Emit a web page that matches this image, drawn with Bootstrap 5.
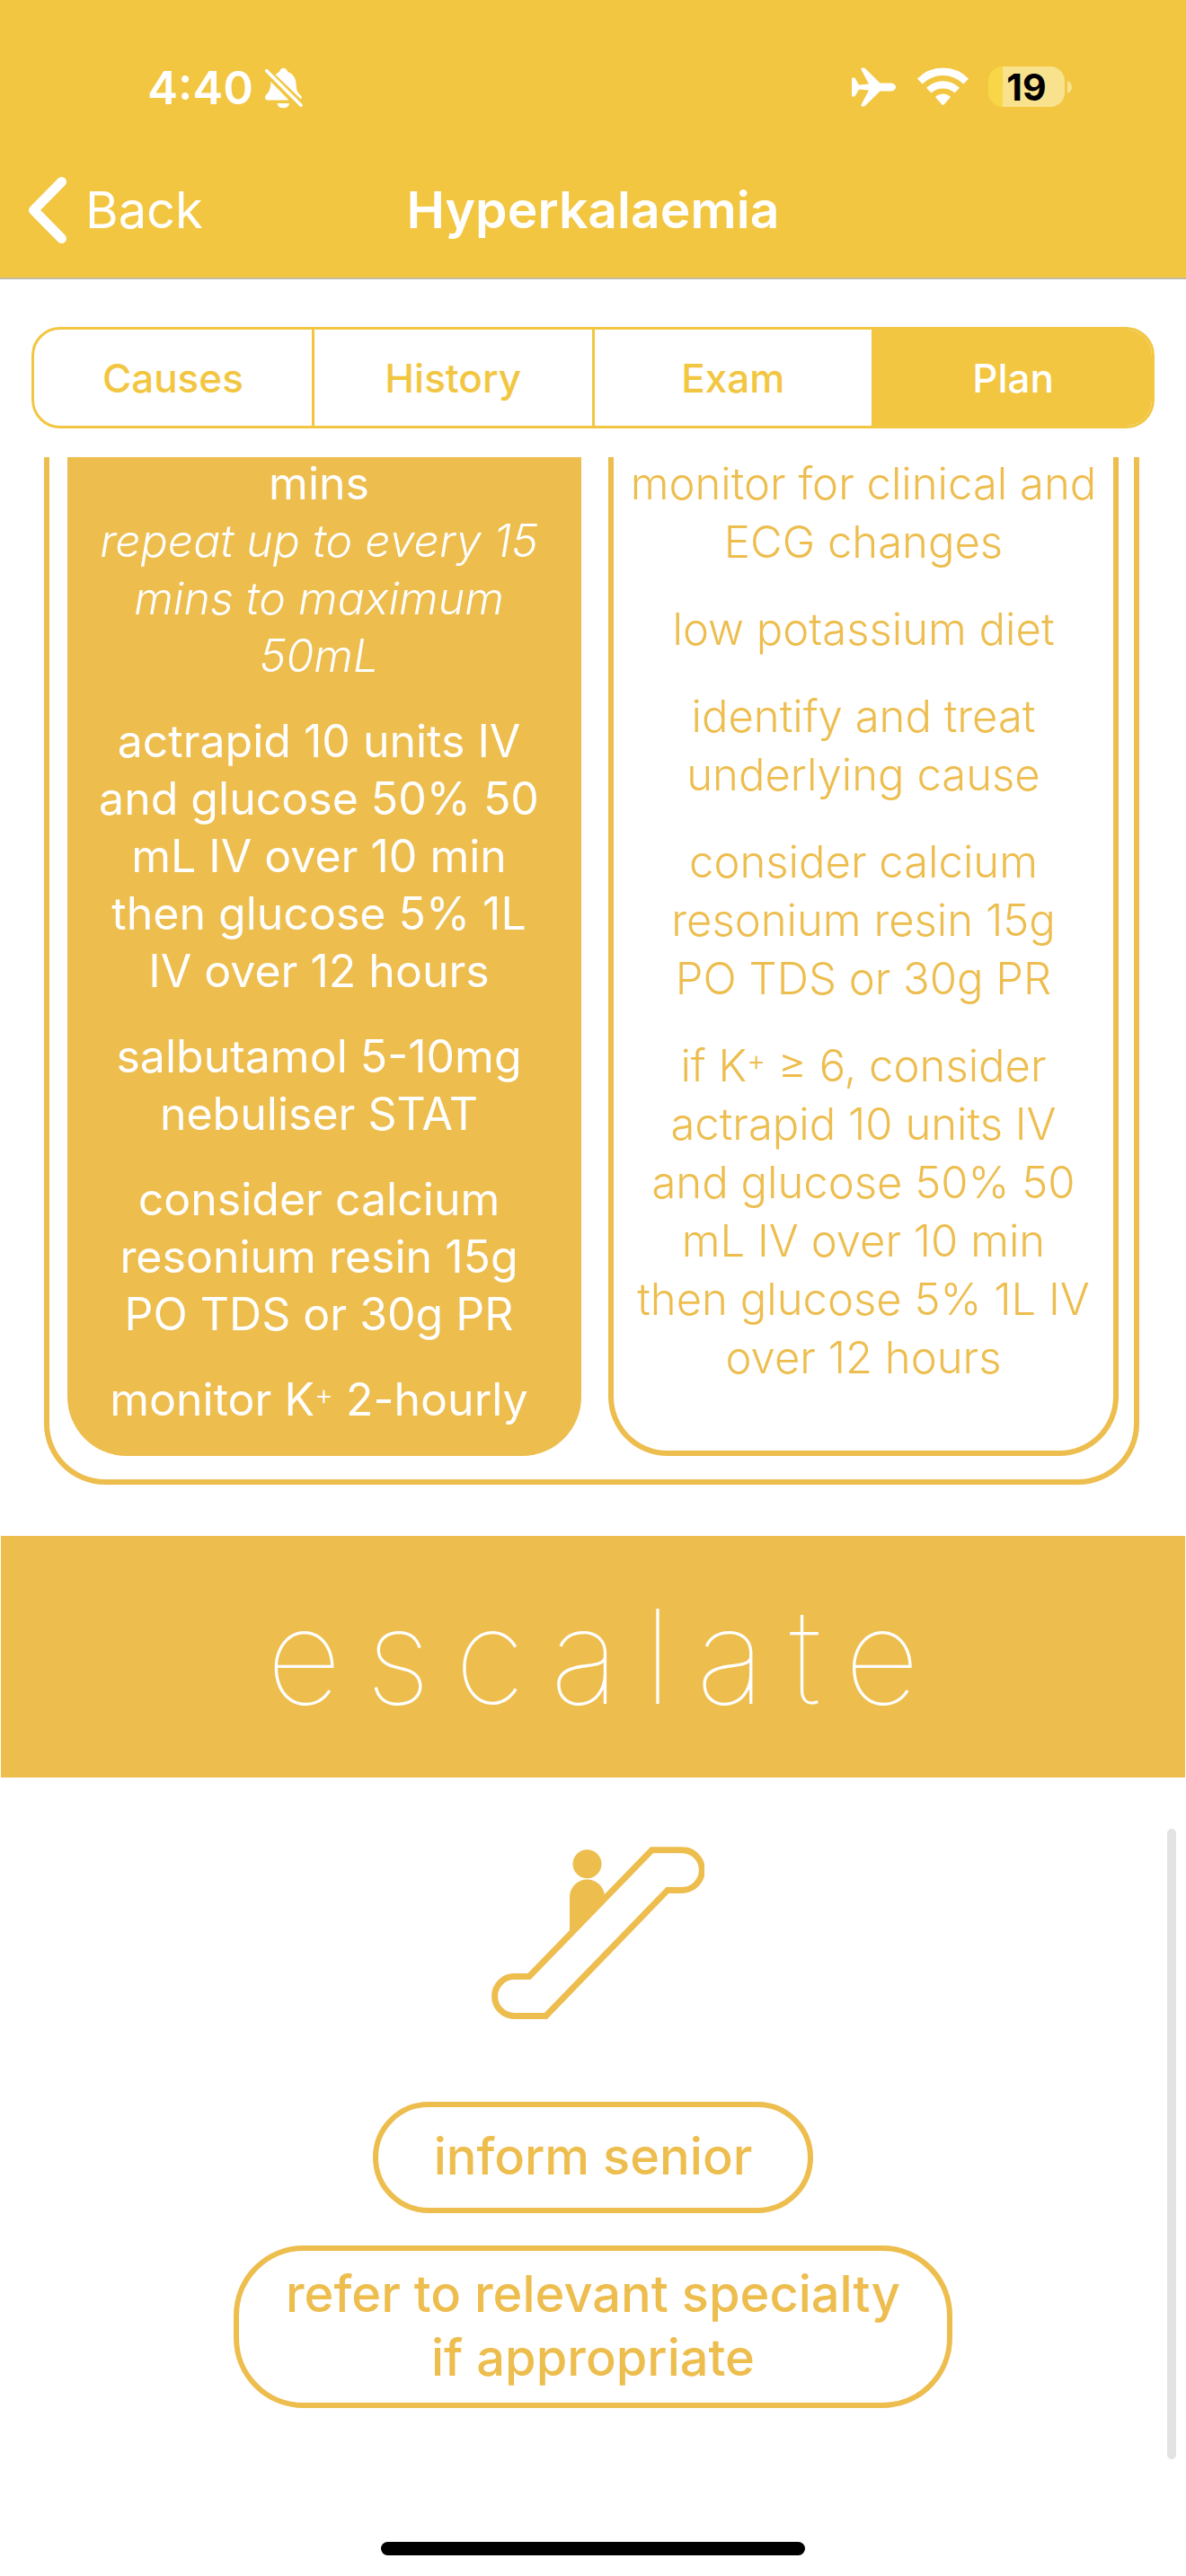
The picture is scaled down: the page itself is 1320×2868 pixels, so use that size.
<!DOCTYPE html>
<html lang="en">
<head>
<meta charset="utf-8">
<meta name="viewport" content="width=device-width, initial-scale=1">
<title>Hyperkalaemia</title>
<link href="https://cdn.jsdelivr.net/npm/bootstrap@5.3.0/dist/css/bootstrap.min.css" rel="stylesheet">
<style>
  :root { --bar: #f2c641; --tone: #edbd4e; }
  body { font-family: Inter, "Liberation Sans", sans-serif; background: #fff; }
  .topbar { background: var(--bar); color: #fff; border-bottom: 2px solid #c3bba4; }
  .statusline { padding: 66px 126px 0 164px; height: 132px; }
  .clock { font-size: 51px; line-height: 64px; font-weight: 600; margin-right: 12px; }
  .battery { width: 85px; height: 45px; border-radius: 16px; font-size: 41px; line-height: 46px; font-weight: 700; color: #000; margin: 0 3px 0 22px;
    background: linear-gradient(to right, #f7d748 16px, #f8e28d 16px); }
  .titlebar { height: 177px; padding: 64px 31px 0; display: grid; grid-template-columns: 1fr auto 1fr; align-items: start; }
  .back-link { font-size: 56px; line-height: 76px; gap: 21px; }
  .page-title { font-size: 57px; line-height: 76px; font-weight: 600; }
  .tabs-wrap { padding: 53px 35px 32px; }
  .segments { border: 3px solid var(--bar); border-radius: 32px; overflow: hidden; height: 113px; }
  .segments .btn { flex: 1 1 0; border: 0; border-radius: 0; font-size: 44px; line-height: 60px; font-weight: 500; color: var(--bar); }
  .segments .btn + .btn { border-left: 3px solid var(--bar); }
  .segments .btn.active { background: var(--bar); color: #fff; }
  .plan-frame { margin: 0 52px 0 49px; padding: 0 17px 26px 20px; border: 6px solid var(--tone); border-top: 0; border-radius: 0 0 68px 68px; }
  .plan-frame > .plan-cols { gap: 30px; }
  .plan-card { flex: 1 1 0; min-width: 0; border: 6px solid var(--tone); border-top: 0; border-radius: 0 0 66px 66px; text-align: center; color: var(--tone); }
  .plan-card p { margin: 0; }
  .plan-card p:first-child { margin-top: -3px; }
  .severe { background: var(--tone); color: #fff; font-size: 50px; line-height: 64px; padding: 0 20px 25px 8px; }
  .severe p + p { margin-top: 31px; }
  .severe em { font-weight: 300; }
  .mild { font-size: 49px; line-height: 65px; font-weight: 300; padding: 0 12px; }
  .mild p + p { margin-top: 32px; }
  .ion { font-size: 32px; line-height: 1; font-weight: 300; vertical-align: 12px; }
  .banner { margin: 57px 1px 0; height: 269px; background: var(--tone); color: #fff; font-size: 146px; line-height: 269px; font-weight: 100; letter-spacing: 27px; padding-left: 27px; text-align: center; }
  .lift-icon { display: block; margin-top: 77px; }
  .pill { border: 6px solid var(--tone); color: var(--tone); background: #fff; font-weight: 500; font-size: 56px; line-height: 71px; }
  .pill:hover { color: var(--tone); background: #fff; border-color: var(--tone); }
  .pill-one { border-radius: 62px; padding: 20px 62px 21px; margin-top: 91px; }
  .pill-two { border-radius: 78px; padding: 13px 52px 14px; margin-top: 36px; }
  .scroll-thumb { top: 2036px; right: 11px; width: 10px; height: 702px; border-radius: 5px; background: #e3e3e3; }
  .home-bar { width: 472px; height: 15px; border-radius: 8px; background: #000; margin: 149px auto 24px; }
</style>
</head>
<body class="position-relative">
<header class="topbar">
  <div class="statusline d-flex align-items-start">
    <span class="clock">4:40</span>
    <svg class="mt-2" width="44" height="48" viewBox="0 0 44 48" fill="#fff" role="img" aria-label="Silent">
      <path d="M12.500 9C14 7.500 15.500 6.500 17 6C18 3 19.500 1.700 21.500 1.700S25 3 26.500 6C32 8 35.300 13 35.500 19C36 27 37 29 40 31.500C41.800 33 42.300 35 41 36.500Z"/>
      <path d="M7.500 17L27.500 37.500H4C0.500 37.500 0.500 33.500 2 32C6 28 7 25 7.500 17Z"/>
      <path d="M14.500 41H28C27.500 44.500 25 46.200 21.300 46.200S15 44.500 14.500 41Z"/>
      <path d="M2.700 4.700L41 43.300" stroke="#fff" stroke-width="3.600" stroke-linecap="round"/>
    </svg>
    <div class="d-flex align-items-center ms-auto mt-2">
      <svg width="49" height="44" viewBox="0 0 49 44" fill="#fff" role="img" aria-label="Airplane mode">
        <path d="M0 12Q2.500 10.500 4 12.500L8 19.500L19 18.500L10.500 2.500Q10 0.500 12 0.500H13Q14.500 0.500 15.500 1.700L31.500 17.500H43C46.500 17.500 49 19.500 49 22S46.500 26.500 43 26.500H31.500L15.500 42.300Q14.500 43.500 13 43.500H12Q10 43.500 10.500 41.500L19 25.500L8 24.500L4 31.500Q2.500 33.500 0 32Z"/>
      </svg>
      <svg class="ms-4" width="57" height="43" viewBox="0 0 57 43" fill="#fff" role="img" aria-label="Wi-Fi">
        <path d="M0 12.500Q12 0.500 28.500 0.500T57 12.500L51.500 18.500Q41.500 9 28.500 9T5.500 18.500Z"/>
        <path d="M10 22.800Q18 15.300 28.500 15.300T47 22.800L41.500 28.500Q36 23.500 28.500 23.500T15.500 28.500Z"/>
        <path d="M20 33Q23.500 29.500 28.500 29.500T37 33L29.800 41.300Q28.500 42.500 27.200 41.300Z"/>
      </svg>
      <div class="battery text-center">19</div>
      <svg width="6" height="14" viewBox="0 0 6 14" aria-hidden="true"><path d="M0 0C3 1 5 4 5 7S3 13 0 14Z" fill="#f8e28d"/></svg>
    </div>
  </div>
  <nav class="titlebar" aria-label="Page">
    <a href="#" class="back-link d-flex align-items-center text-white text-decoration-none">
      <svg width="43" height="76" viewBox="0 0 43 76" fill="none" stroke="#fff" stroke-width="11" stroke-linecap="round" stroke-linejoin="round" aria-hidden="true"><path d="M37.500 6.500L6.500 38L37.500 69.500"/></svg>
      <span>Back</span>
    </a>
    <h1 class="page-title m-0">Hyperkalaemia</h1>
  </nav>
</header>
<main>
  <div class="tabs-wrap">
    <div class="segments d-flex" role="group" aria-label="Sections">
      <button type="button" class="btn">Causes</button>
      <button type="button" class="btn">History</button>
      <button type="button" class="btn">Exam</button>
      <button type="button" class="btn active" aria-pressed="true">Plan</button>
    </div>
  </div>
  <section class="plan-frame">
    <div class="plan-cols d-flex">
      <div class="plan-card severe">
        <p>mins<br><em>repeat up to every 15<br>mins to maximum<br>50mL</em></p>
        <p>actrapid 10 units IV<br>and glucose 50% 50<br>mL IV over 10 min<br>then glucose 5% 1L<br>IV over 12 hours</p>
        <p>salbutamol 5-10mg<br>nebuliser STAT</p>
        <p>consider calcium<br>resonium resin 15g<br>PO TDS or 30g PR</p>
        <p>monitor K<span class="ion">+</span> 2-hourly</p>
      </div>
      <div class="plan-card mild">
        <p>monitor for clinical and<br>ECG changes</p>
        <p>low potassium diet</p>
        <p>identify and treat<br>underlying cause</p>
        <p>consider calcium<br>resonium resin 15g<br>PO TDS or 30g PR</p>
        <p>if K<span class="ion">+</span> ≥ 6, consider<br>actrapid 10 units IV<br>and glucose 50% 50<br>mL IV over 10 min<br>then glucose 5% 1L IV<br>over 12 hours</p>
      </div>
    </div>
  </section>
  <h2 class="banner">escalate</h2>
  <section class="d-flex flex-column align-items-center">
    <svg class="lift-icon" width="248" height="193" viewBox="536 2056 248 193" role="img" aria-label="Escalator">
      <circle cx="653.500" cy="2075.300" r="16" fill="#edbd4e"/>
      <path d="M634 2153V2112A19.500 19.500 0 0 1 673 2112V2116Z" fill="#edbd4e"/>
      <path d="M725.500 2059.700H759A22.300 22.300 0 0 1 759 2104.400H743L607.500 2244.400H572.500A21.800 21.800 0 0 1 572.500 2200.500H589Z" fill="#fff" stroke="#edbd4e" stroke-width="7"/>
    </svg>
    <button type="button" class="btn pill pill-one">inform senior</button>
    <button type="button" class="btn pill pill-two">refer to relevant specialty<br>if appropriate</button>
  </section>
</main>
<div class="scroll-thumb position-absolute"></div>
<div class="home-bar"></div>
<script src="https://cdn.jsdelivr.net/npm/bootstrap@5.3.0/dist/js/bootstrap.bundle.min.js"></script>
</body>
</html>
